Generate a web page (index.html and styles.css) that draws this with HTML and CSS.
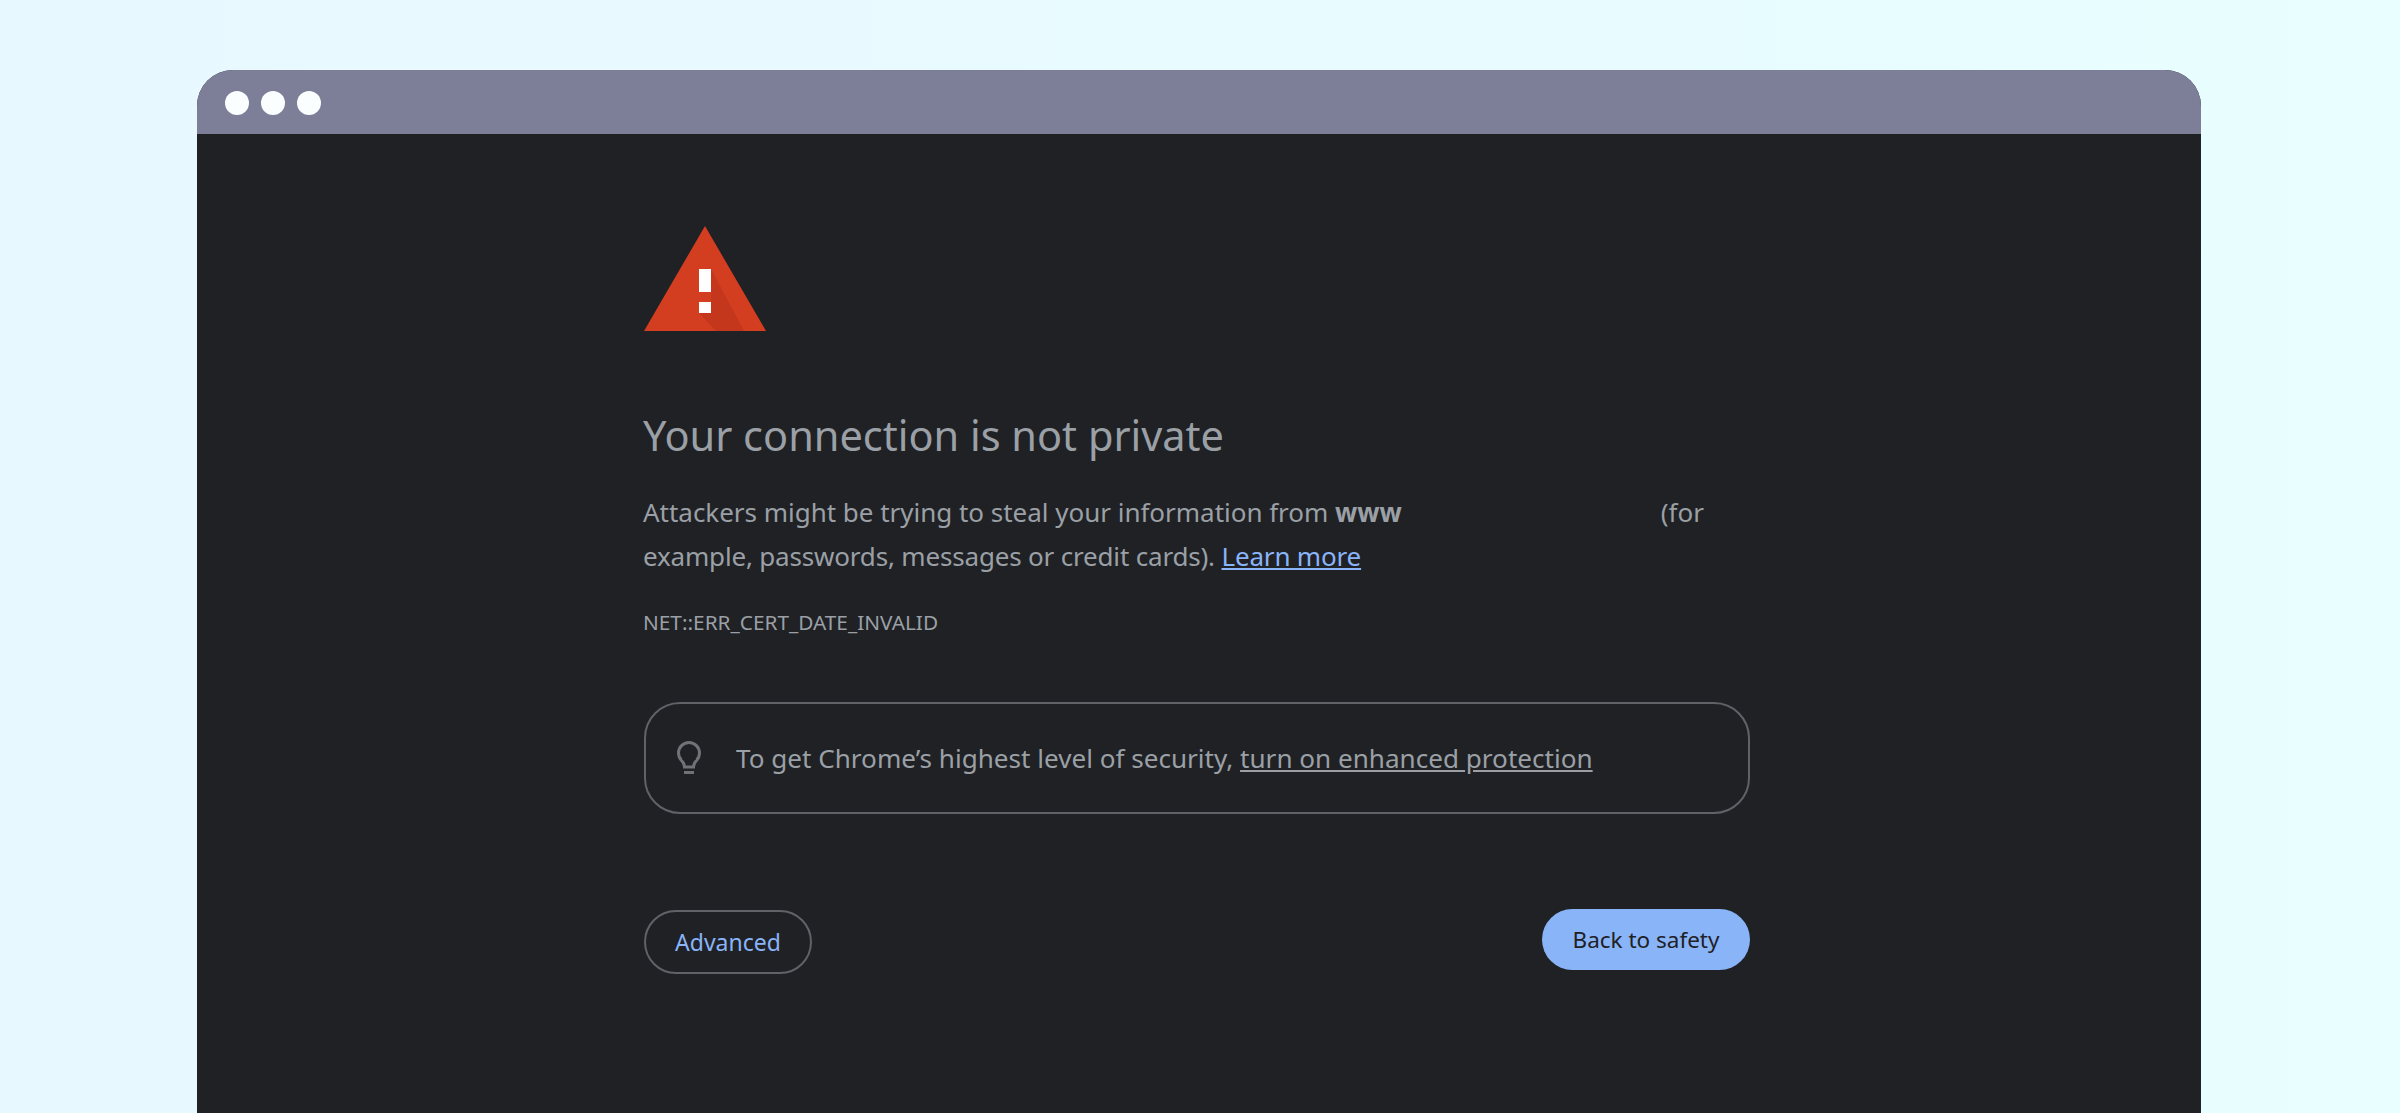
FILE: index.html
```html
<!DOCTYPE html>
<html lang="en">
<head>
  <meta charset="UTF-8">
  <meta name="viewport" content="width=device-width, initial-scale=1.0">
  <title>Privacy error</title>
  <link rel="stylesheet" href="styles.css">
</head>
<body>

  <div class="window">
    <div class="titlebar">
      <span class="dot"></span>
      <span class="dot"></span>
      <span class="dot"></span>
    </div>

    <div class="content">
      <svg class="warning" width="122" height="106" viewBox="0 0 122 106">
        <path fill="#d33d20" d="M61 0 L122 105 L0 105 Z"/>
        <path fill="#c4371c" d="M67 43 L100 105 L72 105 L55 87 L67 87 Z"/>
        <rect fill="#fff" x="55" y="43" width="12" height="23"/>
        <rect fill="#fff" x="55" y="76" width="12" height="11"/>
      </svg>

      <h1>Your connection is not private</h1>

      <p class="message">
        Attackers might be trying to steal your information from <b>www</b><span class="redacted"></span>(for<br>
        <span class="second-line">example, passwords, messages or credit cards). <a href="#">Learn more</a></span>
      </p>

      <div class="error-code">NET::ERR_CERT_DATE_INVALID</div>

      <div class="tip">
        <svg class="bulb" width="28" height="36" viewBox="0 0 28 36">
          <circle cx="14" cy="13" r="10.5" fill="none" stroke="#6f7276" stroke-width="3"/>
          <path fill="#202125" stroke="none" d="M7 19 H21 V26 H7 Z"/>
          <path fill="none" stroke="#6f7276" stroke-width="3" d="M6.5 20.5 C8.500 22.500 9.500 24 9.500 27 H18.500 C18.500 24 19.500 22.500 21.500 20.500"/>
          <rect x="9" y="31" width="10" height="3" fill="#6f7276"/>
        </svg>
        <span>To get Chrome’s highest level of security, <a href="#">turn on enhanced protection</a></span>
      </div>

      <div class="buttons">
        <button class="btn-advanced">Advanced</button>
        <button class="btn-back">Back to safety</button>
      </div>
    </div>
  </div>

</body>
</html>
```

FILE: styles.css
```css
* {
  margin: 0;
  padding: 0;
  box-sizing: border-box;
}

body {
  height: 1113px;
  overflow: hidden;
  padding: 70px 199px 0 197px;
  background: linear-gradient(90deg, #e8f8ff, #e8feff);
  font-family: "Noto Sans", sans-serif;
  color: #9aa0a6;
}

.window {
  height: 1043px;
  border-radius: 36px 36px 0 0;
  overflow: hidden;
  background: #202125;
}

.titlebar {
  display: flex;
  align-items: center;
  gap: 12px;
  height: 64px;
  padding: 2px 0 0 28px;
  background: #7d7f99;
}

.dot {
  width: 24px;
  height: 24px;
  border-radius: 50%;
  background: #fbfeff;
}

.content {
  width: 1107px;
  margin-left: 446px;
  padding-top: 92px;
}

.warning {
  display: block;
  margin-left: 1px;
}

h1 {
  margin-top: 76px;
  font-size: 41.5px;
  line-height: 54px;
  font-weight: 400;
}

.message {
  margin-top: 28px;
  font-size: 26px;
  line-height: 44px;
  letter-spacing: -0.02px;
}

.second-line {
  letter-spacing: -0.18px;
}

.message b {
  font-weight: 700;
}

.redacted {
  display: inline-block;
  width: 259px;
}

.message a {
  color: #8ab4f8;
}

.error-code {
  margin-top: 29px;
  font-size: 20.8px;
  line-height: 30px;
}

.tip {
  display: flex;
  align-items: center;
  gap: 33px;
  height: 112px;
  margin: 65px 0 0 1px;
  padding-left: 29px;
  border: 2px solid #5f6368;
  border-radius: 36px;
  font-size: 26.1px;
}

.tip a {
  color: #9aa0a6;
}

.buttons {
  display: flex;
  justify-content: space-between;
  align-items: flex-start;
  margin: 95px 0 0 1px;
}

button {
  font-family: "Noto Sans", sans-serif;
  font-size: 23px;
  border-radius: 32px;
  cursor: pointer;
}

.btn-advanced {
  width: 168px;
  height: 64px;
  margin-top: 1px;
  background: none;
  border: 2px solid #5f6368;
  color: #8ab4f8;
}

.btn-back {
  width: 208px;
  height: 61px;
  background: #8ab4f8;
  border: none;
  font-size: 22.5px;
  color: #202125;
}
```
